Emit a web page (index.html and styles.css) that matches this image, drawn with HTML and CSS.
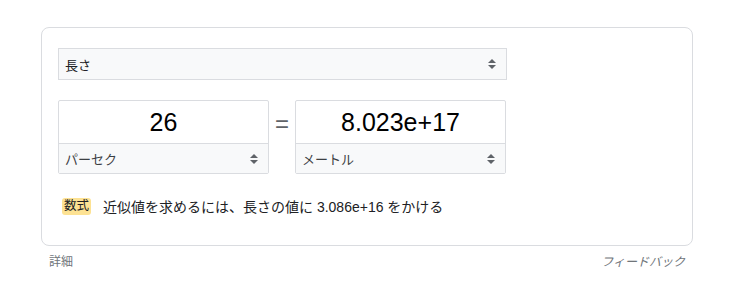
FILE: index.html
```html
<!DOCTYPE html>
<html lang="ja">

<head>
    <meta charset="UTF-8">
    <title>単位換算</title>
    <link rel="stylesheet" href="styles.css">
</head>

<body>
    <div class="wrap">
        <div class="card">
            <div class="selector wide">
                <span>長さ</span>
                <svg class="arrows" width="10" height="12" viewBox="0 0 10 12"><path d="M5 1 L9 5 H1 Z M1 7 H9 L5 11 Z" fill="#5f6368"/></svg>
            </div>

            <div class="convert-row">
                <div class="unit-box">
                    <div class="value">26</div>
                    <div class="selector">
                        <span>パーセク</span>
                        <svg class="arrows" width="10" height="12" viewBox="0 0 10 12"><path d="M5 1 L9 5 H1 Z M1 7 H9 L5 11 Z" fill="#5f6368"/></svg>
                    </div>
                </div>
                <div class="equals">=</div>
                <div class="unit-box">
                    <div class="value">8.023e+17</div>
                    <div class="selector">
                        <span>メートル</span>
                        <svg class="arrows" width="10" height="12" viewBox="0 0 10 12"><path d="M5 1 L9 5 H1 Z M1 7 H9 L5 11 Z" fill="#5f6368"/></svg>
                    </div>
                </div>
            </div>

            <div class="formula">
                <span class="badge">数式</span>
                <span class="formula-text">近似値を求めるには、長さの値に 3.086e+16 をかける</span>
            </div>
        </div>

        <div class="footer">
            <span class="details">詳細</span>
            <span class="feedback">フィードバック</span>
        </div>
    </div>
</body>

</html>
```

FILE: styles.css
```css
body {
    margin: 0;
    padding: 0;
    background: #fff;
    font-family: "Liberation Sans", Arial, "Noto Sans CJK JP", sans-serif;
    color: #202124;
}

.wrap {
    width: 652px;
    padding: 27px 0 0 41px;
}

.card {
    box-sizing: border-box;
    width: 652px;
    height: 219px;
    border: 1px solid #dadce0;
    border-radius: 8px;
    padding: 20px 16px 0 16px;
}

.selector {
    box-sizing: border-box;
    display: flex;
    align-items: center;
    justify-content: space-between;
    height: 32px;
    padding: 0 9px 0 6px;
    background-color: #f8f9fa;
    border: 1px solid #dadce0;
    font-size: 13px;
    color: #202124;
}

.selector.wide {
    width: 449px;
}

.convert-row {
    display: flex;
    align-items: center;
    margin-top: 20px;
}

.unit-box {
    box-sizing: border-box;
    width: 211px;
    height: 74px;
    border: 1px solid #dadce0;
    border-radius: 2px;
    display: flex;
    flex-direction: column;
}

.unit-box .value {
    height: 42px;
    line-height: 42px;
    text-align: center;
    font-size: 25px;
    color: #000;
}

.unit-box .selector {
    flex: 1;
    height: auto;
    border: none;
    border-top: 1px solid #dadce0;
    color: #3c4043;
}

.equals {
    width: 26px;
    text-align: center;
    font-size: 24px;
    color: #5f6368;
    margin-top: -27px;
}

.formula {
    display: flex;
    align-items: center;
    margin-top: 22px;
    padding-left: 4px;
}

.badge {
    background-color: #fde293;
    border-radius: 3px;
    font-size: 12.5px;
    line-height: 17px;
    padding: 0 2px;
    color: #202124;
}

.formula-text {
    margin-left: 12px;
    font-size: 14px;
}

.footer {
    display: flex;
    justify-content: space-between;
    padding: 6px 8px 0 8px;
    font-size: 12px;
    color: #70757a;
}

.feedback {
    font-style: italic;
}
```
